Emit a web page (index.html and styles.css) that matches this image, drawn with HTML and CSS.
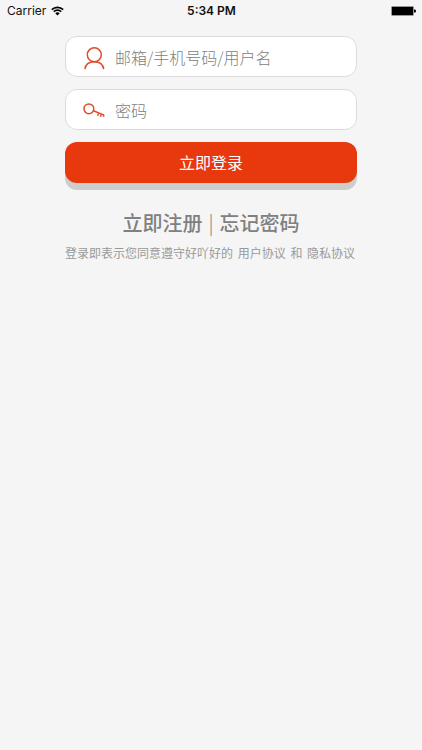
FILE: index.html
```html
<!DOCTYPE html>
<html lang="zh-CN">
<head>
<meta charset="utf-8">
<meta name="viewport" content="width=device-width, initial-scale=1">
<title>登录</title>
<link rel="stylesheet" href="styles.css">
</head>
<body>
<header class="status">
  <div class="status-left">
    <span>Carrier</span>
    <svg class="wifi" viewBox="0 0 13 10" aria-hidden="true">
      <path d="M.8 3.6a8.2 8.2 0 0 1 11.4 0M2.8 5.7a5.3 5.3 0 0 1 7.4 0" fill="none" stroke="#000" stroke-width="1.7"/>
      <path d="M4.3 7.3a3.2 3.2 0 0 1 4.4 0L6.5 9.6z"/>
    </svg>
  </div>
  <time class="clock">5:34 PM</time>
  <div class="status-right">
    <svg class="battery" viewBox="0 0 25 10" aria-hidden="true">
      <rect x=".5" y=".5" width="22" height="9" rx="1" stroke="#999"/>
      <path d="M23 3.5h1q1 0 1 1.5t-1 1.5h-1z"/>
    </svg>
  </div>
</header>
<main class="login">
  <form class="form">
    <label class="field">
      <svg class="icon" viewBox="0 0 22 26" aria-hidden="true">
        <circle cx="10.3" cy="10.8" r="7"/>
        <path d="M.9 25.2c.6-4.6 3.6-7.4 9.4-7.4s8.800 2.800 9.400 7.400"/>
      </svg>
      <input class="input" type="text" placeholder="邮箱/手机号码/用户名" aria-label="邮箱/手机号码/用户名">
    </label>
    <label class="field">
      <svg class="icon" viewBox="0 0 22 26" aria-hidden="true">
        <circle cx="4.900" cy="11.800" r="4.900"/>
        <path d="M9.400 13.800l10.800 4.300M14.800 16l-1.200 2.800M17.400 17l-1 2.800M20 18l-.6 1.800"/>
      </svg>
      <input class="input" type="password" placeholder="密码" aria-label="密码">
    </label>
    <button class="submit" type="button">立即登录</button>
  </form>
  <nav class="links">
    <a href="#register">立即注册</a>
    <span class="divider">|</span>
    <a href="#forgot">忘记密码</a>
  </nav>
  <p class="terms">登录即表示您同意遵守好吖好的 <a href="#terms">用户协议</a> 和 <a href="#privacy">隐私协议</a></p>
</main>
</body>
</html>
```
FILE: styles.css
```css
* {
  box-sizing: border-box;
}

body {
  margin: 0;
  min-height: 100vh;
  background: #f5f5f5;
  font-family: "Noto Sans CJK SC", sans-serif;
}

a {
  color: inherit;
  text-decoration: none;
}

.status {
  display: grid;
  grid-template-columns: 1fr auto 1fr;
  align-items: center;
  height: 22px;
  padding: 0 6px 0 7px;
  font: 12px/22px Inter, sans-serif;
  color: #111;
}

.status-left {
  display: flex;
  align-items: center;
  gap: 5px;
}

.wifi {
  width: 13px;
  height: 10px;
}

.clock {
  font-weight: 600;
}

.status-right {
  display: flex;
  justify-content: flex-end;
}

.battery {
  width: 25px;
  height: 10px;
}

.login {
  padding: 14px 65px;
}

.form {
  display: grid;
  gap: 12px;
}

.field {
  display: flex;
  align-items: center;
  gap: 9px;
  height: 41px;
  padding: 0 18px;
  border: 1px solid #dcdcdc;
  border-radius: 12px;
  background: #fff;
}

.icon {
  flex: none;
  width: 22px;
  height: 26px;
  overflow: visible;
  fill: none;
  stroke: #dc4e2e;
  stroke-width: 1.5;
}

.input {
  flex: 1;
  min-width: 0;
  height: 24px;
  padding: 0;
  border: 0;
  outline: 0;
  background: none;
  font: 300 16px/24px "Noto Sans CJK SC", sans-serif;
  color: #333;
}

.input::placeholder {
  color: #808080;
  opacity: 1;
}

.submit {
  height: 41px;
  padding: 0 0 2px;
  border: 0;
  border-radius: 12px;
  background: #e8380d;
  box-shadow: 0 7px 0 #cdcdcd;
  font: 16px/24px "Noto Sans CJK SC", sans-serif;
  color: #fff;
}

.links {
  display: flex;
  justify-content: center;
  gap: 6px;
  margin-top: 24px;
  font-size: 20px;
  font-weight: 500;
  line-height: 32px;
  color: #808080;
}

.divider {
  font-weight: 300;
}

.terms {
  margin: 4px 0 0;
  font-size: 12px;
  line-height: 20px;
  color: #999;
  text-align: center;
  white-space: nowrap;
}

.terms a {
  padding: 0 2px;
}
```
